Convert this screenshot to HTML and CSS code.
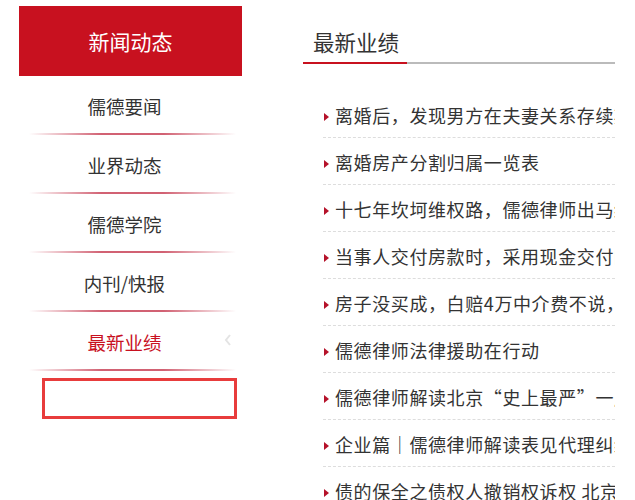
FILE: index.html
```html
<!DOCTYPE html>
<html lang="zh-CN">
<head>
    <meta charset="UTF-8">
    <meta name="viewport" content="width=device-width, initial-scale=1.0">
    <title>儒德 - 最新业绩</title>
    <link rel="stylesheet" href="styles.css">
</head>
<body>
    <div class="page">
        <!-- 左侧栏目导航 -->
        <div class="side">
            <div class="side-title">新闻动态</div>
            <ul class="side-menu">
                <li><a href="#">儒德要闻</a></li>
                <li><a href="#">业界动态</a></li>
                <li><a href="#">儒德学院</a></li>
                <li><a href="#">内刊/快报</a></li>
                <li class="active">
                    <a href="#">最新业绩</a>
                    <svg class="arrow" width="8" height="12" viewBox="0 0 8 12"><path d="M6 1 L2 6 L6 11" fill="none" stroke="#e4e4e4" stroke-width="2"/></svg>
                </li>
            </ul>
            <div class="side-box"></div>
        </div>

        <!-- 右侧文章列表 -->
        <div class="main">
            <div class="main-head">
                <h2>最新业绩</h2>
            </div>
            <ul class="news-list">
                <li><a href="#">离婚后，发现男方在夫妻关系存续期间有隐匿财产怎么办</a></li>
                <li><a href="#">离婚房产分割归属一览表</a></li>
                <li><a href="#">十七年坎坷维权路，儒德律师出马终获胜诉</a></li>
                <li><a href="#">当事人交付房款时，采用现金交付的风险</a></li>
                <li><a href="#">房子没买成，白赔4万中介费不说，还要承担违约金</a></li>
                <li><a href="#">儒德律师法律援助在行动</a></li>
                <li><a href="#">儒德律师解读北京<span class="q">“</span>史上最严<span class="q">”</span>一周年</a></li>
                <li><a href="#">企业篇｜儒德律师解读表见代理纠纷</a></li>
                <li><a href="#">债的保全之债权人撤销权诉权 北京儒德律师事务所</a></li>
            </ul>
        </div>
    </div>
</body>
</html>
```

FILE: styles.css
```css
body {
    margin: 0;
    background: #fff;
    font-family: "Noto Sans CJK SC", "Liberation Sans", sans-serif;
    color: #333;
    overflow: hidden;
}
ul {
    list-style: none;
    margin: 0;
    padding: 0;
}
a {
    color: inherit;
    text-decoration: none;
}
.page {
    display: flex;
    align-items: flex-start;
    padding: 6px 0 0 19px;
}

/* 左侧 */
.side {
    width: 223px;
    flex-shrink: 0;
}
.side-title {
    height: 70px;
    line-height: 70px;
    background: #c8111f;
    color: #fff;
    font-size: 21px;
    text-align: center;
}
.side-menu li {
    position: relative;
    height: 58px;
    line-height: 61px;
    text-align: center;
    font-size: 18.5px;
    margin-left: -8px;
    margin-right: 4px;
}
.side-menu li::after {
    content: "";
    position: absolute;
    left: 18px;
    right: 2px;
    bottom: -1px;
    height: 2px;
    background: linear-gradient(to right, rgba(255,255,255,0), rgba(190,30,55,0.7) 35%, rgba(190,30,55,0.7) 65%, rgba(255,255,255,0));
}
.side-menu li + li {
    margin-top: 1px;
}
.side-menu .active {
    color: #c8111f;
}
.side-menu .arrow {
    position: absolute;
    right: 6px;
    top: 22px;
}
.side-box {
    margin: 8px 5px 0 23px;
    height: 35px;
    border: 3px solid #e83c3c;
}

/* 右侧 */
.main {
    margin-left: 61px;
    width: 312px;
    flex-shrink: 0;
}
.main-head {
    height: 56px;
    border-bottom: 2px solid #bbb;
    position: relative;
}
.main-head h2 {
    margin: 0;
    padding-left: 10px;
    font-size: 21.5px;
    font-weight: normal;
    line-height: 72px;
    color: #333;
}
.main-head::after {
    content: "";
    position: absolute;
    left: 0;
    bottom: -2px;
    width: 104px;
    height: 2px;
    background: #c8111f;
}
.news-list {
    margin: 27px 0 0 20px;
}
.news-list li {
    position: relative;
    height: 46px;
    line-height: 49px;
    border-bottom: 1px dashed #ddd;
    padding-left: 12px;
    white-space: nowrap;
    overflow: hidden;
    font-size: 18px;
    letter-spacing: 0.6px;
}
.news-list li::before {
    content: "";
    position: absolute;
    left: 1px;
    top: 22px;
    border-left: 5px solid #b5122a;
    border-top: 4px solid transparent;
    border-bottom: 4px solid transparent;
}
/* 中文全角引号 */
.news-list .q {
    font-feature-settings: "fwid";
}
```
